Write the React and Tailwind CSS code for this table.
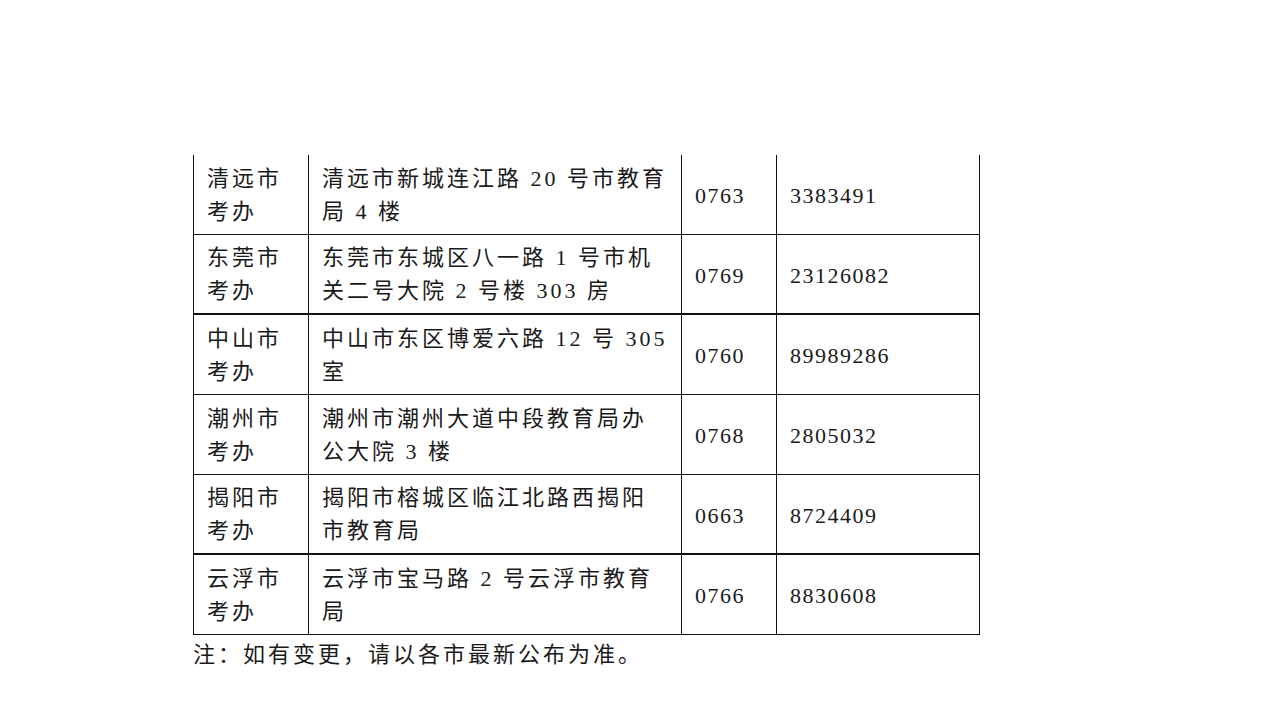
const rows = [
  { city: ['清远市', '考办'], addr: ['清远市新城连江路 20 号市教育', '局 4 楼'], code: '0763', tel: '3383491' },
  { city: ['东莞市', '考办'], addr: ['东莞市东城区八一路 1 号市机', '关二号大院 2 号楼 303 房'], code: '0769', tel: '23126082', thick: true },
  { city: ['中山市', '考办'], addr: ['中山市东区博爱六路 12 号 305', '室'], code: '0760', tel: '89989286' },
  { city: ['潮州市', '考办'], addr: ['潮州市潮州大道中段教育局办', '公大院 3 楼'], code: '0768', tel: '2805032' },
  { city: ['揭阳市', '考办'], addr: ['揭阳市榕城区临江北路西揭阳', '市教育局'], code: '0663', tel: '8724409', thick: true },
  { city: ['云浮市', '考办'], addr: ['云浮市宝马路 2 号云浮市教育', '局'], code: '0766', tel: '8830608' },
]

function Cell({ lines, last, num }) {
  return (
    <div className={`flex flex-col justify-center px-[13px] border-l border-[#111] ${last ? 'border-r' : ''} ${num ? 'tracking-[1.5px] pt-[2px]' : ''}`}>
      {lines.map((l, i) => (
        <div key={i} className="whitespace-nowrap leading-[33px]">{l}</div>
      ))}
    </div>
  )
}

export default function App() {
  return (
    <div className="w-[1280px] h-[727px] bg-white text-[#1a1a1a] text-[22px] tracking-[3px] font-['Liberation_Serif','Noto_Sans_CJK_SC',serif] pt-[155px] pl-[193px]">
      <div className="w-[787px]">
        {rows.map((r, i) => (
          <div
            key={i}
            className={`grid grid-cols-[115px_373px_95px_204px] h-[80px] border-[#111] ${r.thick ? 'border-b-2' : 'border-b'}`}
          >
            <Cell lines={r.city} />
            <Cell lines={r.addr} />
            <Cell lines={[r.code]} num />
            <Cell lines={[r.tel]} last num />
          </div>
        ))}
      </div>
      <p className="mt-[3px] leading-[33px] whitespace-nowrap">注：如有变更，请以各市最新公布为准。</p>
    </div>
  )
}
